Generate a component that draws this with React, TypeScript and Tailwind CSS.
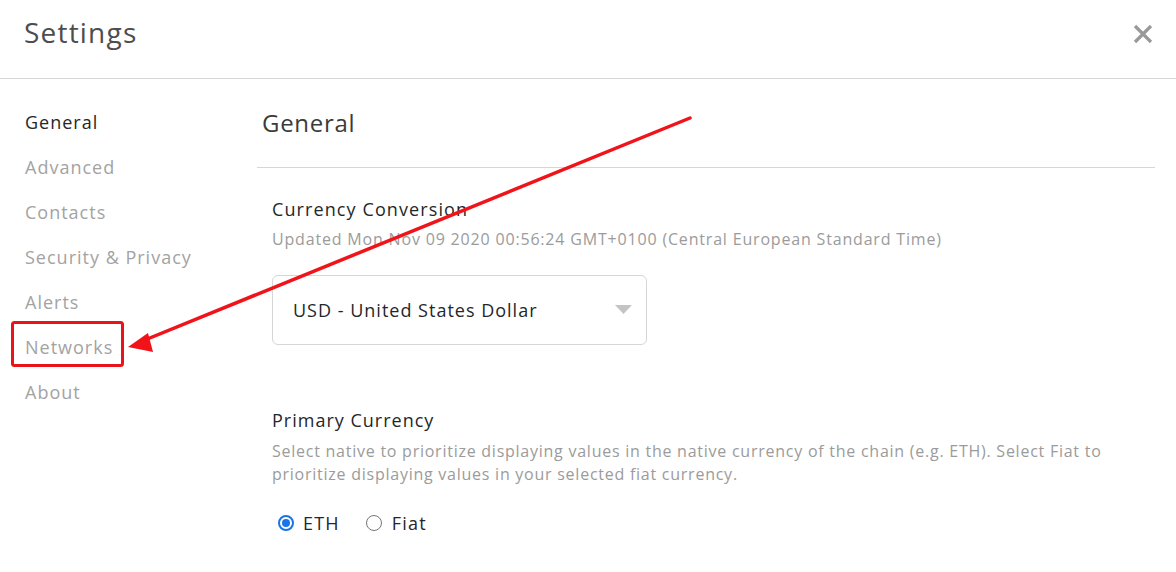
import React from "react";

const font = { fontFamily: '"Open Sans", "Liberation Sans", sans-serif' };

const navItems = ["General", "Advanced", "Contacts", "Security & Privacy", "Alerts", "Networks", "About"];

export default function App() {
  return (
    <div className="relative w-[1176px] h-[572px] bg-white overflow-hidden text-[#24272a]" style={font}>
      <div className="h-[79px] border-b border-[#d6d6d6] flex items-center justify-between pl-[24px] pr-[22px]">
        <div className="text-[28px] leading-[36px] text-[#4d4d4d] tracking-[1.2px] -mt-[14px]">Settings</div>
        <svg width="22" height="22" viewBox="0 0 22 22" className="-mt-[11px]">
          <path d="M3 3 L19 19 M19 3 L3 19" stroke="#999" strokeWidth="3.2" strokeLinecap="butt" />
        </svg>
      </div>
      <div className="flex">
        <div className="w-[257px] pt-[21px] pl-[25px] flex flex-col">
          {navItems.map((n, i) => (
            <div
              key={n}
              className={`h-[45px] flex items-center text-[18px] tracking-[1px] ${i === 0 ? "text-[#24272a]" : "text-[#a3a3a3]"}`}
            >
              {n}
            </div>
          ))}
        </div>
        <div className="w-[898px] flex flex-col">
          <div className="h-[89px] flex items-center pl-[5px] border-b border-[#d6d6d6] text-[24px] tracking-[0.7px] text-[#3b3b3b]">
            General
          </div>
          <div className="pl-[15px] flex flex-col">
            <div className="mt-[29px] text-[18px] leading-[24px] tracking-[1.1px] text-[#24272a]">Currency Conversion</div>
            <div className="mt-[7px] text-[16px] leading-[22px] text-[#9b9b9b] tracking-[0.82px]">
              Updated Mon Nov 09 2020 00:56:24 GMT+0100 (Central European Standard Time)
            </div>
            <div className="mt-[25px] w-[375px] h-[70px] border border-[#d6d6d6] rounded-[6px] flex items-center justify-between pl-[20px] pr-[14px]">
              <span className="text-[18px] tracking-[1px] text-[#24272a]">USD - United States Dollar</span>
              <svg width="17" height="10" viewBox="0 0 17 10">
                <path d="M0 0 L17 0 L8.5 9 Z" fill="#c4c4c4" />
              </svg>
            </div>
            <div className="mt-[63px] text-[18px] leading-[24px] tracking-[1px] text-[#24272a]">Primary Currency</div>
            <div className="mt-[8px] text-[16px] leading-[23px] text-[#9b9b9b] tracking-[0.75px] pr-[30px]">
              Select native to prioritize displaying values in the native currency of the chain (e.g. ETH). Select Fiat to prioritize displaying values in your selected fiat currency.
            </div>
            <div className="mt-[25px] h-[24px] flex items-center text-[18px] tracking-[1.2px]">
              <div className="ml-[6px] w-[16px] h-[16px] rounded-full border-2 border-[#1a73e8] flex items-center justify-center">
                <div className="w-[8px] h-[8px] rounded-full bg-[#1a73e8]" />
              </div>
              <span className="ml-[9px] text-[#24272a]">ETH</span>
              <div className="ml-[26px] w-[16px] h-[16px] rounded-full border border-[#767676]" />
              <span className="ml-[10px] text-[#24272a]">Fiat</span>
            </div>
          </div>
        </div>
      </div>
      <svg className="absolute inset-0 pointer-events-none" width="1176" height="572">
        <rect x="12.5" y="322.5" width="110" height="43" rx="2" fill="none" stroke="#e8141a" strokeWidth="3" />
        <line x1="690" y1="118" x2="140" y2="342" stroke="#f0141a" strokeWidth="3.5" strokeLinecap="round" />
        <polygon points="128,347 148,333 153,352" fill="#f0141a" />
      </svg>
    </div>
  );
}
